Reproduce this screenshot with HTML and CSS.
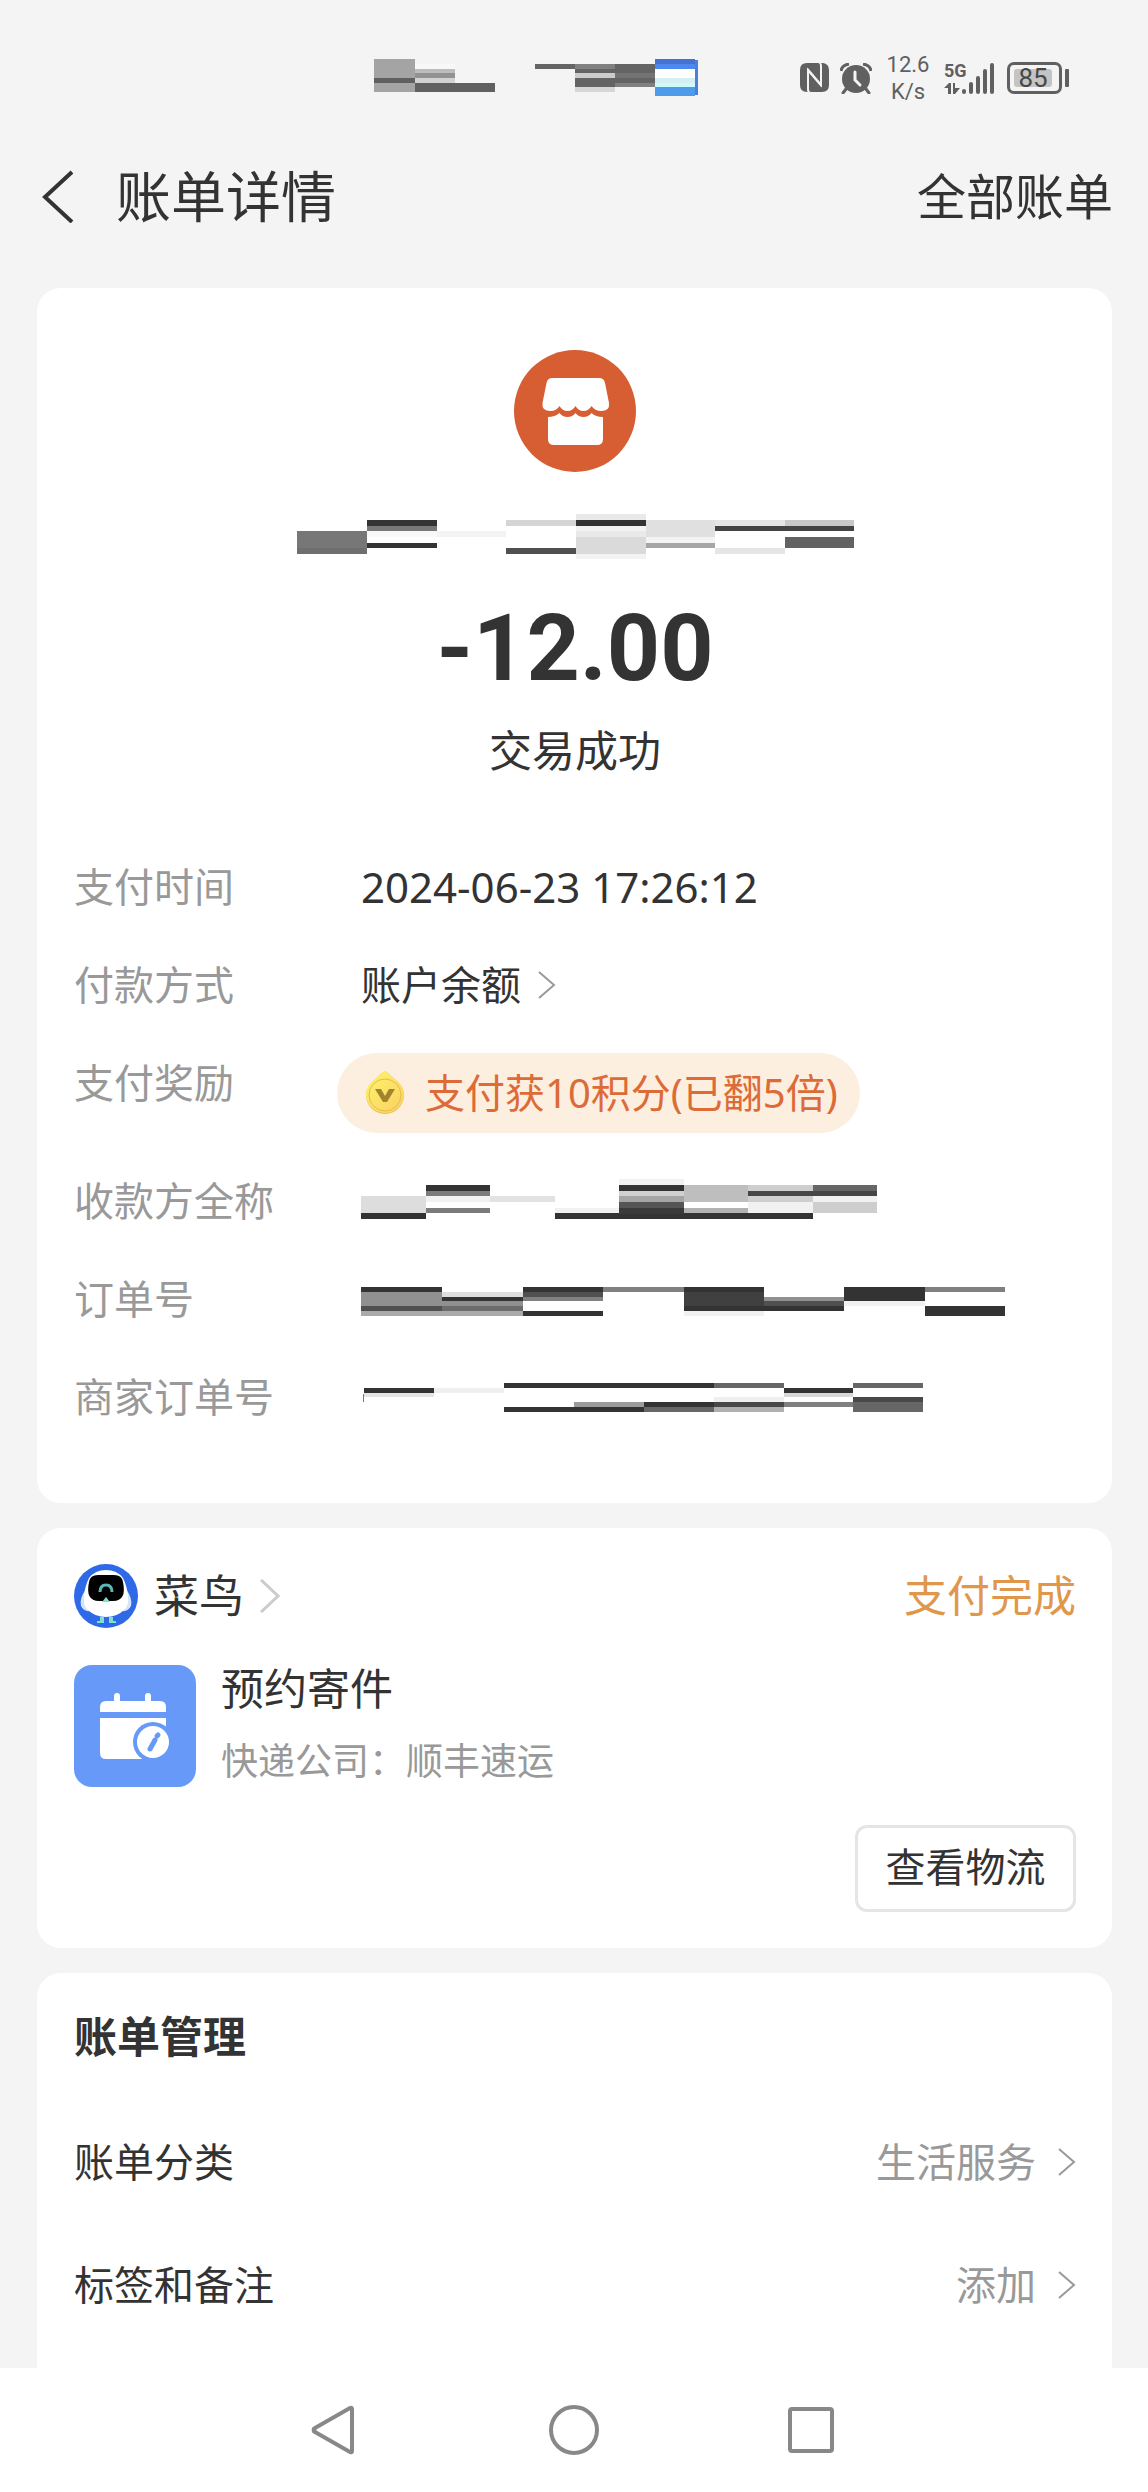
FILE: index.html
```html
<!DOCTYPE html>
<html lang="zh-CN">
<head>
<meta charset="utf-8">
<meta name="viewport" content="width=device-width, initial-scale=1">
<title>账单详情</title>
<link rel="stylesheet" href="styles.css">
</head>
<body>
<div class="statusbar">
  <svg class="mosaic status-mask" width="324" height="38" viewBox="0 0 324 38" aria-hidden="true">
    <path fill="#a4a4a4" d="M0 0h41v33H0z"/><path fill="#606060" d="M0 19h41v5H0z"/>
    <path fill="#f8f8f8" d="M41 5h40v5H41z"/><path fill="#bcbcbc" d="M41 10h40v4H41z"/><path fill="#929292" d="M41 14h40v5H41z"/><path fill="#d2d2d2" d="M41 19h40v5H41z"/><path fill="#606060" d="M41 24h80v9H41z"/>
    <path fill="#646464" d="M161 5h40v5h-40zM201 10h40v4h-40zM201 19h40v9h-40zM241 5h40v9h-40zM241 19h40v5h-40z"/>
    <path fill="#808080" d="M201 5h40v5h-40zM241 24h40v4h-40z"/><path fill="#747474" d="M241 14h40v5h-40z"/><path fill="#cccccc" d="M201 14h40v5h-40z"/><path fill="#d6d6d6" d="M201 28h40v5h-40z"/>
    <path fill="#4472d0" d="M281 0h40v5h-40z"/><path fill="#4e88ee" d="M281 5h40v5h-40z"/><path fill="#fff" d="M281 10h40v9h-40z"/><path fill="#d4eef2" d="M281 19h40v5h-40z"/><path fill="#cffafb" d="M281 24h40v4h-40z"/><path fill="#4e9bec" d="M281 28h40v9h-40z"/><path fill="#4a80dc" d="M321 1h3v35h-3z"/>
  </svg>
  <div class="status-icons">
    <svg width="30" height="30" viewBox="0 0 30 30" aria-label="NFC" role="img"><path fill="#606060" d="M7 0h11q2 0 2 3v16L8 5q-1-1-1 1v21q0 2 1 2H7Q0 29 0 22V7Q0 0 7 0z"/><path fill="#606060" d="M21 0h2q6 1 6 7v15q0 7-7 7H11q-2 0-2-3V10l12 14q1 1 1-1V3q0-2-1-3z"/></svg>
    <svg class="alarm" width="32" height="31" viewBox="0 0 32 31" aria-label="闹钟" role="img"><circle cx="16" cy="16" r="14" fill="#606060"/><path d="M1 8Q2 2 9 1M31 8Q30 2 23 1" stroke="#606060" stroke-width="3" fill="none"/><path d="M6 26l-3 4M26 26l3 4" stroke="#606060" stroke-width="3" stroke-linecap="round"/><path d="M15 9v8l5 5" stroke="#f4f4f4" stroke-width="3" fill="none" stroke-linecap="round"/></svg>
    <div class="speed">12.6<br>K/s</div>
    <div class="network">
      <span class="network-type">5G</span>
      <svg width="51" height="33" viewBox="0 0 51 33" aria-hidden="true"><path fill="#606060" d="M0 26l5-5h2v11H4v-6zM9 21h2v5h5l-5 6H9z"/><path d="M20 29v1M27 22v8M34 16v14M41 9v21M48 3v27" stroke="#606060" stroke-width="4" stroke-linecap="round"/></svg>
    </div>
    <div class="battery"><span class="battery-level">85</span></div>
  </div>
</div>

<header class="header">
  <button class="back" type="button" aria-label="返回"><svg width="32" height="54" viewBox="0 0 32 54"><path d="M30 3L3 28l27 25" fill="none" stroke="#333" stroke-width="4"/></svg></button>
  <h1 class="header-title">账单详情</h1>
  <a class="header-link" href="#all">全部账单</a>
</header>

<main class="main">
  <section class="card summary">
    <svg width="122" height="122" viewBox="0 0 122 122" aria-hidden="true"><circle cx="61" cy="61" r="61" fill="#d65e32"/><path fill="#fff" d="M38 28h47q5 0 6 5l4 20q1 8-8 8-6 0-9.500-5-3 5-8 5t-8-5q-3 5-8 5t-8-5q-3 5-9 5-9 0-8-8l4-20q1-5 6-5z"/><path fill="#fff" d="M34 67q7 0 11.500-4 3 4 8 4t8-4q3 4 8 4t8-4q4 4 11.500 4v22q0 6-6 6H40q-6 0-6-6z"/></svg>
    <svg class="mosaic payee-mask" width="557" height="45" viewBox="0 0 557 45" aria-hidden="true">
      <path fill="#777" d="M0 17h70v17H0z"/><path fill="#6f6f6f" d="M0 34h70v6H0z"/>
      <path fill="#333" d="M70 6h70v6H70zM70 29h70v5H70zM279 6h70v6h-70z"/><path fill="#787878" d="M70 12h70v5H70z"/><path fill="#f8f8f8" d="M70 17h70v6H70z"/><path fill="#f3f3f3" d="M140 17h69v6h-69zM279 12h70v5h-70zM279 40h70v5h-70zM349 23h69v6h-69z"/>
      <path fill="#d5d5d5" d="M209 6h70v6h-70z"/><path fill="#505050" d="M209 34h70v6h-70z"/><path fill="#e9e9e9" d="M279 0h70v6h-70zM279 17h70v6h-70z"/><path fill="#dadada" d="M279 23h70v17h-70z"/>
      <path fill="#e0e0e0" d="M349 6h69v17h-69z"/><path fill="#a5a5a5" d="M349 29h69v5h-69z"/><path fill="#e5e5e5" d="M418 6h70v6h-70zM418 34h70v6h-70z"/><path fill="#444" d="M418 12h139v5H418z"/><path fill="#c8c8c8" d="M488 6h69v6h-69z"/><path fill="#626262" d="M488 23h69v11h-69z"/>
    </svg>
    <p class="amount">-12.00</p>
    <p class="result">交易成功</p>
    <dl class="details">
      <div class="detail"><dt>支付时间</dt><dd class="time">2024-06-23 17:26:12</dd></div>
      <div class="detail"><dt>付款方式</dt><dd><a class="method" href="#method">账户余额<svg width="20" height="30" viewBox="0 0 20 30" aria-hidden="true"><path d="M2 2l15 13L2 28" fill="none" stroke="#999" stroke-width="2"/></svg></a></dd></div>
      <div class="detail detail-reward"><dt>支付奖励</dt><dd><a class="reward" href="#reward"><svg width="40" height="44" viewBox="0 0 40 44" aria-hidden="true"><defs><linearGradient id="gold" x1="0" y1="0" x2="1" y2="1"><stop offset="0" stop-color="#fdf56c"/><stop offset="1" stop-color="#fbcf63"/></linearGradient></defs><path fill="#e8bd55" d="M17 2q3-3 6 0l10 9q6 6 6 13a19 19 0 0 1-38 0q0-7 6-13z"/><path fill="url(#gold)" d="M17 2q3-3 6 0l10 9q6 5 6 12a19 19 0 0 1-38 0q0-7 6-12z"/><circle cx="20" cy="24" r="16" fill="none" stroke="#e5bc4a"/><path fill="#a1842d" d="M10 18h6l4 7 4-7h6l-8 13h-4z"/></svg>支付获10积分(已翻5倍)</a></dd></div>
      <div class="detail"><dt>收款方全称</dt><dd><svg class="mosaic" width="516" height="44" viewBox="0 0 516 44" aria-hidden="true">
        <path fill="#ddd" d="M0 17h65v17H0z"/><path fill="#333" d="M0 34h65v6H0zM65 6h64v6H65zM194 34h258v6H194zM258 6h65v6h-65z"/><path fill="#7b7b7b" d="M65 12h64v5H65zM65 29h64v5H65z"/><path fill="#f1f1f1" d="M65 17h64v6H65zM194 29h64v5h-64zM387 23h65v11h-65zM452 17h64v6h-64zM258 0h65v6h-65z"/><path fill="#e2e2e2" d="M129 17h65v6h-65z"/>
        <path fill="#d0d0d0" d="M258 12h65v5h-65z"/><path fill="#a5a5a5" d="M258 17h65v6h-65z"/><path fill="#555" d="M258 23h65v6h-65z"/><path fill="#3a3a3a" d="M258 29h65v6h-65z"/><path fill="#bebebe" d="M323 6h64v17h-64z"/><path fill="#b2b2b2" d="M323 29h64v5h-64z"/><path fill="#cecece" d="M387 6h65v6h-65zM387 17h65v6h-65zM452 23h64v11h-64z"/><path fill="#454545" d="M387 12h129v5H387z"/><path fill="#666" d="M452 6h64v6h-64z"/>
      </svg></dd></div>
      <div class="detail"><dt>订单号</dt><dd><svg class="mosaic" width="644" height="33" viewBox="0 -4 644 33" aria-hidden="true">
        <path fill="#333" d="M0 0h81v5H0zM81 10h81v4H81zM162 0h80v5h-80zM162 24h80v5h-80zM323 0h80v5h-80zM323 19h160v5H323zM483 0h81v14h-81zM564 19h80v10h-80z"/><path fill="#909090" d="M0 5h81v14H0zM81 14h81v5H81zM403 10h80v4h-80z"/><path fill="#505050" d="M0 19h81v5H0zM162 5h80v5h-80zM403 14h80v5h-80z"/><path fill="#aaa" d="M0 24h162v5H0z"/><path fill="#dedede" d="M81 5h81v5H81z"/><path fill="#6c6c6c" d="M81 19h81v5H81z"/><path fill="#808080" d="M162 10h80v4h-80zM242 0h81v5h-81zM564 0h80v5h-80z"/><path fill="#404040" d="M323 5h80v14h-80z"/><path fill="#f1f1f1" d="M323 24h80v5h-80zM483 14h81v5h-81z"/>
      </svg></dd></div>
      <div class="detail"><dt>商家订单号</dt><dd><svg class="mosaic" width="562" height="29" viewBox="0 0 562 29" aria-hidden="true">
        <path fill="#777" d="M2 11h1v8H2z"/><path fill="#333" d="M3 5h70v5H3zM143 0h210v5H143zM423 5h69v5h-69zM143 24h140v5H143zM283 19h70v5h-70z"/><path fill="#e5e5e5" d="M3 10h70v4H3z"/><path fill="#efefef" d="M73 5h70v5H73zM353 14h70v5h-70z"/><path fill="#9c9c9c" d="M213 19h70v5h-70z"/><path fill="#666" d="M283 24h70v5h-70zM353 0h70v5h-70zM492 0h70v5h-70zM492 19h70v10h-70z"/><path fill="#484848" d="M353 19h70v5h-70zM492 14h70v5h-70z"/><path fill="#b0b0b0" d="M353 24h70v5h-70z"/><path fill="#d8d8d8" d="M423 10h69v4h-69z"/><path fill="#808080" d="M423 19h69v5h-69z"/>
      </svg></dd></div>
    </dl>
  </section>

  <section class="card order">
    <div class="order-head">
      <a class="merchant" href="#merchant">
        <svg width="64" height="64" viewBox="0 0 64 64" aria-hidden="true"><circle cx="32" cy="32" r="32" fill="#2e6ae8"/><path fill="#d6e4fb" d="M12 25Q5 35 7 42q3 6 9 5zM52 25q7 10 5 17-3 6-9 5z"/><path fill="#fff" d="M32 6Q43 6 49 14q4 8 5 18 1 10-4 14-7 7-18 7t-18-7q-5-4-4-14 1-10 5-18Q21 6 32 6z"/><path fill="#000" d="M24 11h16q8 0 9 7 4 19-10 19H25q-14 0-10-19 1-7 9-7z"/><path d="M26 28q0-7 6-7t6 7" fill="none" stroke="#58b8b8" stroke-width="3"/><path fill="#7fe0cb" d="M32 33l4 5h-8zM26 53h4v6h-7v-2h3zM35 53h4v4h3v2h-7z"/></svg>
        <span>菜鸟</span>
        <svg width="20" height="34" viewBox="0 0 20 34" aria-hidden="true"><path d="M1 1l17 16L1 33" fill="none" stroke="#ccc" stroke-width="3"/></svg>
      </a>
      <span class="order-state">支付完成</span>
    </div>
    <div class="order-item">
      <svg width="122" height="122" viewBox="0 0 122 122" aria-hidden="true"><rect width="122" height="122" rx="18" fill="#6699f8"/><path d="M43 31v8M74 31v8" stroke="#fff" stroke-width="6" stroke-linecap="round"/><path fill="#fff" d="M32 36h54q6 0 6 6v5H26v-5q0-6 6-6zM26 53h66v41H32q-6 0-6-6z"/><path fill="#6699f8" d="M92 61v34H68z"/><circle cx="79" cy="77" r="20" fill="#6699f8"/><circle cx="79" cy="77" r="16" fill="#fff"/><path d="M76 84l5-9" stroke="#6699f8" stroke-width="5" stroke-linecap="round"/><path d="M83 71l1-1" stroke="#6699f8" stroke-width="5" stroke-linecap="round"/></svg>
      <div class="order-text">
        <h2 class="order-title">预约寄件</h2>
        <p class="order-note">快递公司：顺丰速运</p>
      </div>
    </div>
    <button class="track" type="button">查看物流</button>
  </section>

  <section class="card manage">
    <h2 class="manage-title">账单管理</h2>
    <a class="manage-row" href="#category"><span>账单分类</span><span class="manage-value">生活服务<svg width="18" height="30" viewBox="0 0 18 30" aria-hidden="true"><path d="M1 2l15 13L1 28" fill="none" stroke="#999" stroke-width="2"/></svg></span></a>
    <a class="manage-row" href="#note"><span>标签和备注</span><span class="manage-value">添加<svg width="18" height="30" viewBox="0 0 18 30" aria-hidden="true"><path d="M1 2l15 13L1 28" fill="none" stroke="#999" stroke-width="2"/></svg></span></a>
  </section>
</main>

<nav class="navbar" aria-label="系统导航">
  <button type="button" aria-label="后退"><svg width="52" height="52" viewBox="0 0 52 52"><path d="M3 26q-1-1 1-2L39 4q2-1 2 1v42q0 2-2 1L4 28q-2-1-1-2z" fill="none" stroke="#888" stroke-width="4"/></svg></button>
  <button type="button" aria-label="主页"><svg width="52" height="52" viewBox="0 0 52 52"><circle cx="26" cy="26" r="23" fill="none" stroke="#888" stroke-width="4"/></svg></button>
  <button type="button" aria-label="最近任务"><svg width="52" height="52" viewBox="0 0 52 52"><rect x="5" y="5" width="42" height="42" rx="2" fill="none" stroke="#888" stroke-width="4"/></svg></button>
</nav>
</body>
</html>
```
FILE: styles.css
```css
* { box-sizing: border-box; }

body {
  margin: 0;
  min-height: 100vh;
  display: flex;
  flex-direction: column;
  background: #f4f4f4;
  color: #333;
  font-family: "Noto Sans", "Noto Sans CJK SC", sans-serif;
  font-size: 40px;
  line-height: 56px;
}

h1, h2, p, dl, dd { margin: 0; }
a { color: inherit; text-decoration: none; }
svg { display: block; flex: none; }
button { font: inherit; color: inherit; background: none; border: 0; padding: 0; cursor: pointer; }
.mosaic { shape-rendering: crispEdges; }

/* Status bar */
.statusbar {
  height: 156px;
  padding: 0 78px;
  display: flex;
  align-items: center;
  justify-content: flex-end;
  gap: 102px;
  color: #606060;
}
.status-icons { display: flex; align-items: center; }
.alarm { margin-left: 10px; }
.speed {
  width: 60px;
  margin-left: 6px;
  text-align: center;
  font: 400 22px/27px "Roboto", sans-serif;
}
.network { margin-left: 6px; position: relative; }
.network-type {
  position: absolute;
  left: 0;
  top: 0;
  font: bold 18px/18px "Roboto", sans-serif;
}
.battery {
  position: relative;
  width: 55px;
  height: 32px;
  margin: 0 8px 0 12px;
  padding: 4px;
  border: 3px solid #606060;
  border-radius: 7px;
}
.battery::after {
  content: "";
  position: absolute;
  right: -10px;
  top: 4px;
  width: 4px;
  height: 18px;
  border-radius: 1px;
  background: #606060;
}
.battery-level {
  display: block;
  width: 38px;
  height: 18px;
  border-radius: 3px;
  background: #c4c4c4;
  color: #484848;
  text-align: center;
  font: 400 26px/18px "Roboto", sans-serif;
}

/* Page header */
.header {
  height: 80px;
  padding: 0 35px 0 42px;
  display: flex;
  align-items: center;
}
.back { margin-right: 42px; }
.header-title { font-size: 55px; line-height: 80px; font-weight: 400; }
.header-link { margin-left: auto; font-size: 49px; line-height: 80px; }

/* Cards */
.main {
  flex: 1;
  display: flex;
  flex-direction: column;
  gap: 25px;
  padding: 52px 36px 0 37px;
}
.card { padding: 36px 36px 36px 37px; border-radius: 24px; background: #fff; }

.summary {
  display: flex;
  flex-direction: column;
  align-items: center;
  padding-top: 62px;
  padding-bottom: 57px;
}
.payee-mask { margin-top: 42px; }
.amount { margin-top: 40px; font: bold 93px/100px "Roboto", sans-serif; }
.result { margin-top: 22px; font-size: 43px; line-height: 60px; }
.details { align-self: stretch; margin-top: 57px; line-height: 98px; }
.detail { display: flex; min-height: 98px; align-items: flex-start; }
.detail dt { width: 287px; flex: none; color: #999; }
.detail dd { min-height: 98px; display: flex; align-items: center; }
.detail .time { font-size: 42px; }
.detail-reward dd { height: 118px; margin-left: -24px; }
.method { display: flex; align-items: center; gap: 16px; }
.reward {
  height: 80px;
  padding: 0 22px 0 28px;
  display: flex;
  align-items: center;
  gap: 20px;
  border-radius: 40px;
  background: #fcefe0;
  color: #dc6b38;
}

/* Related order */
.order { display: flex; flex-direction: column; }
.order-head { display: flex; align-items: center; justify-content: space-between; font-size: 43px; line-height: 64px; }
.merchant { display: flex; align-items: center; gap: 16px; font-size: 45px; }
.order-state { color: #e0974c; }
.order-item { display: flex; gap: 25px; margin-top: 37px; }
.order-text { display: flex; flex-direction: column; gap: 24px; line-height: 48px; }
.order-title { font-size: 43px; font-weight: 400; }
.order-note { font-size: 37px; color: #999; }
.track {
  align-self: flex-end;
  width: 221px;
  height: 87px;
  margin-top: 38px;
  padding-bottom: 4px;
  border: 3px solid #e5e5e5;
  border-radius: 12px;
}

/* Bill management */
.manage { flex: 1; border-radius: 24px 24px 0 0; padding-bottom: 0; }
.manage-title { margin-bottom: 35px; font-size: 43px; line-height: 56px; font-weight: 700; }
.manage-row { display: flex; align-items: center; justify-content: space-between; line-height: 123px; }
.manage-value { display: flex; align-items: center; gap: 22px; color: #999; }

/* System navigation */
.navbar {
  height: 124px;
  display: flex;
  align-items: center;
  justify-content: center;
  gap: 185px;
  background: #fff;
}
```
